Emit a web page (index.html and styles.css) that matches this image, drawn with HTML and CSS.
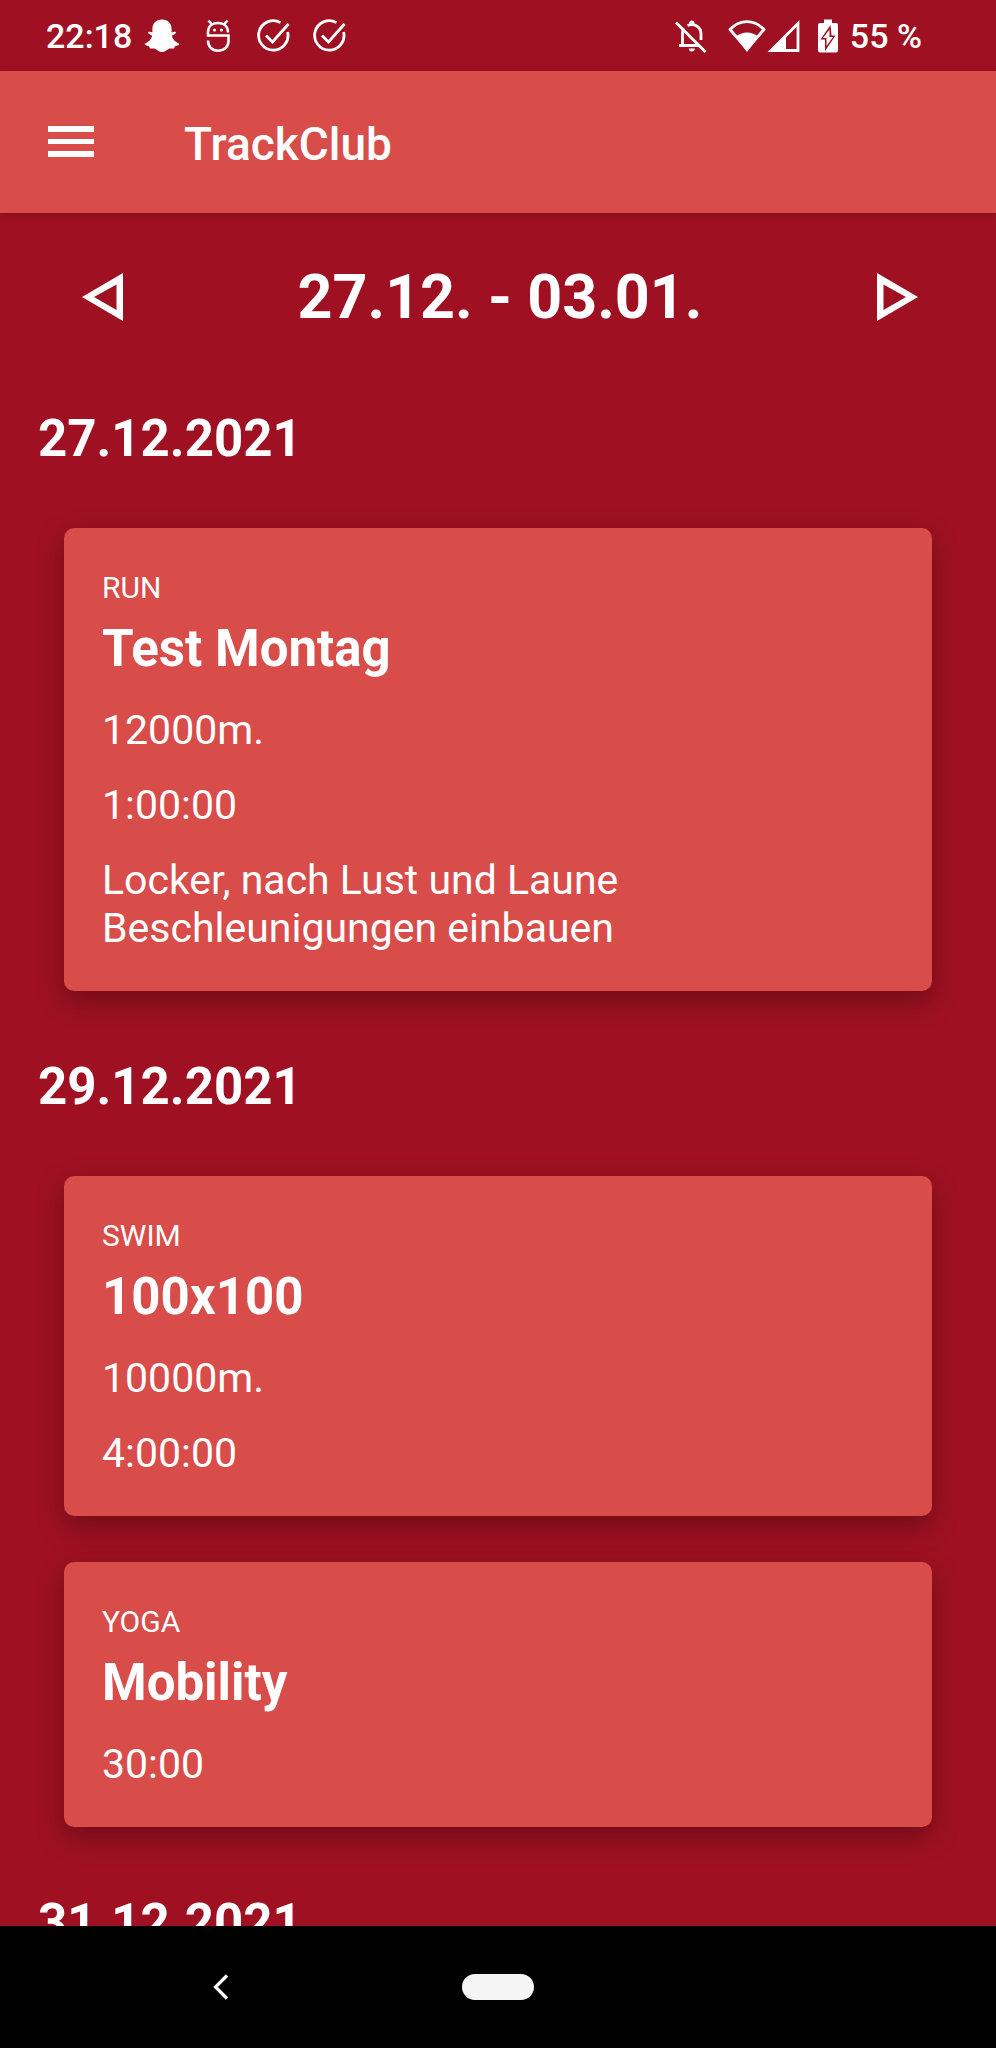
FILE: index.html
```html
<!DOCTYPE html>
<html lang="de">

<head>
    <meta charset="UTF-8">
    <meta name="viewport" content="width=device-width, initial-scale=1.0">
    <title>TrackClub</title>
    <link rel="stylesheet" href="styles.css">
</head>

<body>
    <div class="statusBar">
        <span class="time">22:18</span>
        <div class="notifications">
            <svg width="36" height="36" viewBox="0 0 36 36">
                <path fill="#fff" d="M18 1.500c6 0 9.600 4 9.600 9.500v3.500c1.500 0 3.400-1.300 4.200-.3.900 1.200-3 2.700-4 3.600.8 3.600 3.400 6.200 7.700 8.200-1 1.700-3 1.800-4.600 2.200l-.8 2.200c-2 .2-4-.3-5.600.5-2.300 1.300-3.500 3.100-6.500 3.100s-4.200-1.800-6.500-3.100c-1.600-.8-3.600-.3-5.600-.5l-.8-2.200C3.500 27.800 1.500 27.700.5 26c4.300-2 6.900-4.600 7.700-8.200-1-.9-4.900-2.400-4-3.600.8-1 2.700.3 4.200.3V11C8.400 5.500 12 1.500 18 1.500z"/>
            </svg>
            <svg width="36" height="36" viewBox="0 0 36 36" fill="none" stroke="#fff" stroke-width="2.600">
                <path d="M28 14.500C28 8.500 24 5 18 5S8 8.500 8 14.500v3h20.500V23c0 5.500-4 9.700-10.300 9.700S8 28.500 8 22.500"/>
                <path d="M8.500 2.500L12 6.500M27.500 2.500L24 6.500"/>
                <circle cx="14.500" cy="12" r="1.600" fill="#fff" stroke="none"/>
                <circle cx="21.500" cy="12" r="1.600" fill="#fff" stroke="none"/>
            </svg>
            <svg width="36" height="36" viewBox="0 0 36 36" fill="none" stroke="#fff" stroke-width="2.800">
                <path d="M24.500 4.600A14.700 14.700 0 1 0 31.600 14"/>
                <path d="M10 17.500l6.500 6.500L32.500 6"/>
            </svg>
            <svg width="36" height="36" viewBox="0 0 36 36" fill="none" stroke="#fff" stroke-width="2.800">
                <path d="M24.500 4.600A14.700 14.700 0 1 0 31.600 14"/>
                <path d="M10 17.500l6.500 6.500L32.500 6"/>
            </svg>
        </div>
        <div class="system">
            <svg class="bell" width="36" height="36" viewBox="0 0 36 36" fill="none" stroke="#fff" stroke-width="2.800">
                <path d="M4 4.500L33.500 34"/>
                <path d="M7 27.500h20M10.500 27V15c0-1.800.4-3.400 1.200-4.700M15.500 7.500c6.500-2.500 13.500.8 13.500 8.500v6"/>
                <path fill="#fff" stroke="none" d="M17.200 6.500V5a2.600 2.600 0 0 1 5.200 0v1.500zM16.800 30.500h6a3 3 0 0 1-6 0z"/>
            </svg>
            <svg width="38" height="36" viewBox="0 0 38 36">
                <path fill="none" stroke="#fff" stroke-width="2.800" stroke-linejoin="round" d="M2 11.500C12 1 26 1 36 11.500L19 31z"/>
                <path fill="#fff" d="M19 34L7.500 19c6-6 17-6 23 0z"/>
            </svg>
            <svg width="34" height="36" viewBox="0 0 34 36">
                <path fill="none" stroke="#fff" stroke-width="2.800" d="M32 5.500V32.500H5z"/>
                <path fill="#fff" d="M3 33L20 16.500V33z"/>
            </svg>
            <svg class="battery" width="20" height="36" viewBox="0 0 20 36">
                <path fill="#fff" fill-rule="evenodd" d="M6 1.500h8V5h4a2 2 0 0 1 2 2v25.500a2 2 0 0 1-2 2H2a2 2 0 0 1-2-2V7a2 2 0 0 1 2-2h4zM12.500 7L2.500 21.500h4.500V33L17.500 17.500h-4z"/>
                <path fill="#fff" d="M11.500 11.500v7.500h3.500L8.500 28v-8H5z"/>
            </svg>
            <span>55 %</span>
        </div>
    </div>

    <header class="appBar">
        <button class="menuBtn" aria-label="Menu">
            <svg width="46" height="32" viewBox="0 0 46 32">
                <path fill="#fff" d="M0 0h46v6H0zM0 13h46v5H0zM0 25h46v6H0z"/>
            </svg>
        </button>
        <h1>TrackClub</h1>
    </header>

    <main class="content">
        <div class="week">
            <button aria-label="Previous week">
                <svg width="42" height="48" viewBox="0 0 42 48">
                    <path fill="#fff" fill-rule="evenodd" d="M41 0v48L0 24zM34.500 11.500L12 24l22.500 13z"/>
                </svg>
            </button>
            <h2>27.12. - 03.01.</h2>
            <button aria-label="Next week">
                <svg width="42" height="48" viewBox="0 0 42 48">
                    <path fill="#fff" fill-rule="evenodd" d="M1 0v48l41-24zM7.500 11.500L30 24 7.500 37z"/>
                </svg>
            </button>
        </div>

        <section class="day">
            <h3>27.12.2021</h3>
            <article class="card">
                <span class="type">RUN</span>
                <h4>Test Montag</h4>
                <p>12000m.</p>
                <p>1:00:00</p>
                <p>Locker, nach Lust und Laune<br>Beschleunigungen einbauen</p>
            </article>
        </section>

        <section class="day">
            <h3>29.12.2021</h3>
            <article class="card">
                <span class="type">SWIM</span>
                <h4>100x100</h4>
                <p>10000m.</p>
                <p>4:00:00</p>
            </article>
            <article class="card">
                <span class="type">YOGA</span>
                <h4>Mobility</h4>
                <p>30:00</p>
            </article>
        </section>

        <section class="day">
            <h3>31.12.2021</h3>
        </section>
    </main>

    <nav class="navBar">
        <button aria-label="Back">
            <svg width="16" height="28" viewBox="0 0 16 28">
                <path fill="none" stroke="#fff" stroke-width="3.200" d="M14 2.500L2.500 14 14 25.500"/>
            </svg>
        </button>
        <button aria-label="Home"><span class="pill"></span></button>
    </nav>
</body>

</html>
```
FILE: styles.css
```css
* {
    padding: 0;
    margin: 0;
    box-sizing: border-box;
}

body {
    height: 100vh;
    display: flex;
    flex-direction: column;
    overflow: hidden;
    background-color: #9f1122;
    color: #fff;
    font-family: Roboto, sans-serif;
}

button {
    display: flex;
    align-items: center;
    justify-content: center;
    background: none;
    border: 0;
    cursor: pointer;
}

svg {
    display: block;
    flex-shrink: 0;
}

.statusBar {
    height: 71px;
    flex-shrink: 0;
    display: flex;
    align-items: center;
    padding: 0 74px 0 46px;
    font-size: 34px;
    font-weight: 500;
}

.notifications {
    display: flex;
    gap: 20px;
    margin-left: 12px;
}

.system {
    display: flex;
    align-items: center;
    margin-left: auto;
}

.bell {
    margin-right: 20px;
}

.battery {
    margin: 0 12px 0 18px;
}

.appBar {
    height: 142px;
    flex-shrink: 0;
    display: flex;
    align-items: center;
    gap: 80px;
    padding: 0 38px;
    background-color: #d84c4a;
    box-shadow: 0 2px 8px rgba(0, 0, 0, 0.2);
}

.menuBtn {
    width: 66px;
    height: 66px;
}

.appBar h1 {
    padding-top: 4px;
    font-size: 46px;
    font-weight: 500;
}

.content {
    flex: 1;
    min-height: 0;
    overflow: hidden;
}

.week {
    display: flex;
    align-items: center;
    justify-content: space-between;
    padding: 48px 66px 10px 70px;
}

.week button {
    width: 66px;
    height: 66px;
}

.week h2 {
    font-size: 61px;
    line-height: 72px;
}

.day {
    padding: 66px 64px 0;
}

.day h3 {
    margin: 0 -26px 59px;
    font-size: 51px;
    line-height: 60px;
}

.card {
    padding: 38px 38px 39px;
    border-radius: 10px;
    background-color: #d84c4a;
    box-shadow: 0 10px 28px rgba(0, 0, 0, 0.3);
}

.card + .card {
    margin-top: 46px;
}

.type {
    display: block;
    font-size: 30px;
    line-height: 44px;
}

.card h4 {
    margin-top: 9px;
    font-size: 51px;
    line-height: 60px;
}

.card p {
    margin-top: 27px;
    font-size: 41px;
    line-height: 48px;
}

.navBar {
    height: 122px;
    flex-shrink: 0;
    display: grid;
    grid-template-columns: repeat(3, 1fr);
    padding: 0 82px;
    background-color: #000;
}

.pill {
    width: 72px;
    height: 26px;
    border-radius: 13px;
    background-color: #f5f5f5;
}
```
